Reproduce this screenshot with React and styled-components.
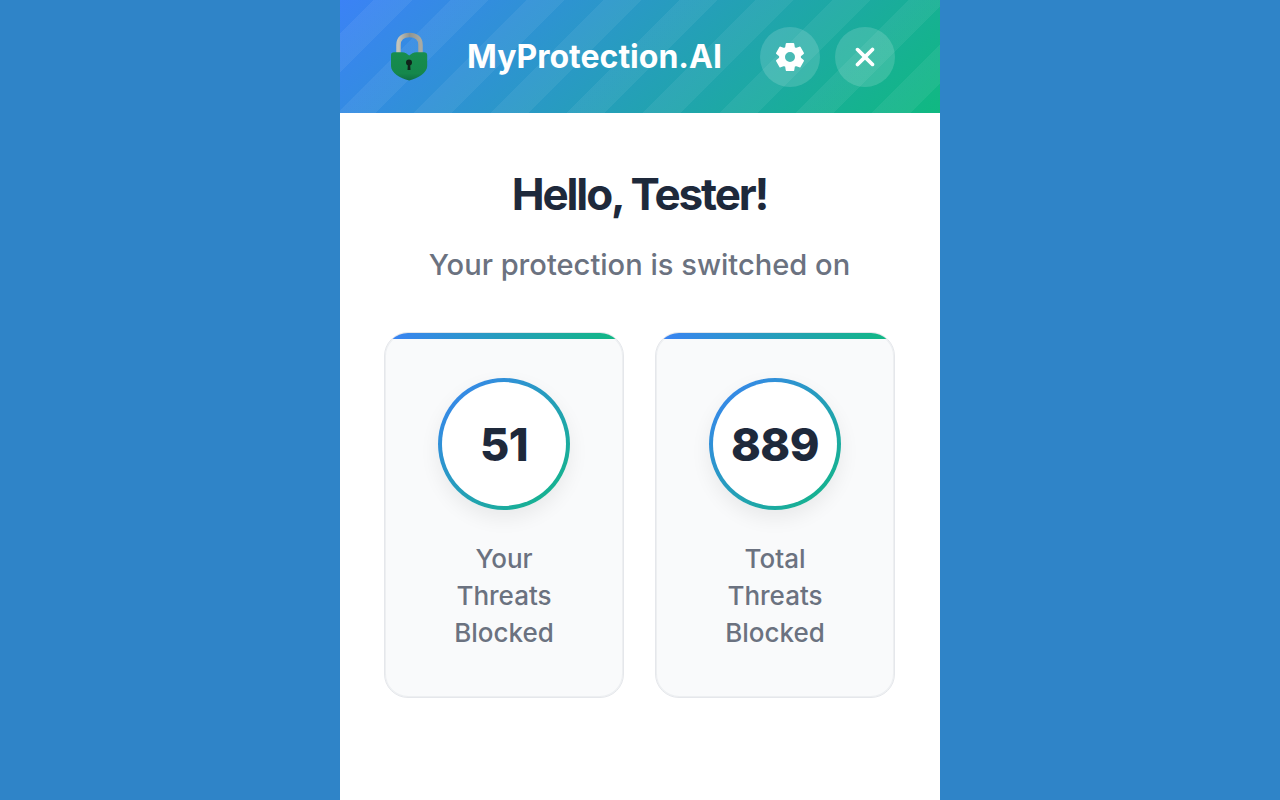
import React from 'react'
import styled, { createGlobalStyle } from 'styled-components'
import { FaXmark } from 'react-icons/fa6'

const GlobalStyle = createGlobalStyle`
  html, body { margin: 0; padding: 0; height: 100%; }
  body { background: #2f84c8; font-family: Inter, "Noto Sans", sans-serif; }
  #root { height: 100%; }
`

// six teeth, pointing straight up and down
const toothAngles = [-90, -30, 30, 90, 150, 210]
const gearOutline = toothAngles
  .flatMap((a) => [[10, a - 23], [13.5, a - 14], [13.5, a + 14], [10, a + 23]])
  .map(([r, deg], i) => {
    const rad = (deg * Math.PI) / 180
    return `${i ? 'L' : 'M'}${(15 + r * Math.cos(rad)).toFixed(2)} ${(15 + r * Math.sin(rad)).toFixed(2)}`
  })
  .join('')

function GearIcon() {
  return (
    <svg width="30" height="30" viewBox="0 0 30 30">
      <path
        d={`${gearOutline}ZM15 9A6 6 0 1 0 15 21A6 6 0 1 0 15 9Z`}
        fill="#fff"
        fillRule="evenodd"
        stroke="#fff"
        strokeWidth="2"
        strokeLinejoin="round"
      />
    </svg>
  )
}

function LockIcon() {
  return (
    <svg width="40" height="50" viewBox="0 0 40 50">
      <defs>
        <linearGradient id="shackle" x1="0" y1="0" x2="1" y2="0">
          <stop offset="0" stopColor="#c4c4ba" />
          <stop offset="0.5" stopColor="#8f9490" />
          <stop offset="1" stopColor="#a9aaa2" />
        </linearGradient>
        <linearGradient id="body" x1="0" y1="0" x2="0" y2="1">
          <stop offset="0" stopColor="#178d4e" />
          <stop offset="0.75" stopColor="#15874c" />
          <stop offset="1" stopColor="#0f6f45" />
        </linearGradient>
      </defs>
      <path d="M9.500 24V13C9.500 6.500 14 3 20.500 3S31.500 6.500 31.500 13V24" fill="none" stroke="url(#shackle)" strokeWidth="4.500" />
      <path d="M2 23C2 21 3 20.200 5 20.200H13C16 20.200 18.500 22 20.200 23.500C22 22 24.500 20.200 27.500 20.200H35C37 20.200 38.200 21 38.200 23V34C38.200 41 29 46 20.200 48.500C11 46 2 41 2 34Z" fill="url(#body)" />
      <circle cx="20" cy="30.500" r="3" fill="#10231a" />
      <path d="M18.900 31H21.100L21.500 38H18.500Z" fill="#10231a" />
    </svg>
  )
}

function StatCard({ value, lines }) {
  return (
    <Card>
      <Ring>
        <Count>{value}</Count>
      </Ring>
      <Label>
        {lines.map((line) => (
          <span key={line}>{line}</span>
        ))}
      </Label>
    </Card>
  )
}

export default function App() {
  return (
    <>
      <GlobalStyle />
      <Panel>
        <Header>
          <Brand>
            <LockSlot><LockIcon /></LockSlot>
            <Title>MyProtection.AI</Title>
          </Brand>
          <Actions>
            <RoundButton><GearIcon /></RoundButton>
            <RoundButton><FaXmark size={30} /></RoundButton>
          </Actions>
        </Header>
        <Main>
          <Greeting>Hello, Tester!</Greeting>
          <Status>Your protection is switched on</Status>
          <Stats>
            <StatCard value="51" lines={['Your', 'Threats', 'Blocked']} />
            <StatCard value="889" lines={['Total', 'Threats', 'Blocked']} />
          </Stats>
        </Main>
      </Panel>
    </>
  )
}

const Panel = styled.div`
  width: 600px;
  height: 800px;
  margin: 0 auto;
  background: #fff;
  overflow: hidden;
`

const Header = styled.header`
  height: 113px;
  box-sizing: border-box;
  padding: 0 45px 0 49px;
  display: flex;
  align-items: center;
  justify-content: space-between;
  background:
    repeating-linear-gradient(
      135deg,
      rgba(255, 255, 255, 0) 0 24px,
      rgba(255, 255, 255, 0.06) 24px 51px,
      rgba(255, 255, 255, 0) 51px 54px
    ),
    linear-gradient(135deg, #3b82f6, #10b981);
`

const Brand = styled.div`
  display: flex;
  align-items: center;
  gap: 38px;
`

const LockSlot = styled.div`
  display: flex;
  width: 40px;
`

const Title = styled.h1`
  margin: 0;
  font-size: 32px;
  font-weight: 700;
  color: #fff;
`

const Actions = styled.div`
  display: flex;
  gap: 15px;
`

const RoundButton = styled.button`
  width: 60px;
  height: 60px;
  padding: 0;
  border: none;
  border-radius: 50%;
  display: flex;
  align-items: center;
  justify-content: center;
  color: #fff;
  background: rgba(255, 255, 255, 0.15);
`

const Main = styled.main`
  padding: 53px 45px 0 44px;
  display: flex;
  flex-direction: column;
  align-items: center;
`

const Greeting = styled.h2`
  margin: 0;
  font-size: 44px;
  line-height: 56px;
  font-weight: 700;
  letter-spacing: -2.100px;
  color: #1e293b;
`

const Status = styled.p`
  margin: 24px 0 0;
  font-size: 29.100px;
  line-height: 38px;
  font-weight: 500;
  color: #6b7280;
`

const Stats = styled.div`
  margin-top: 48px;
  display: flex;
  gap: 31px;
`

const Card = styled.div`
  position: relative;
  width: 240px;
  height: 366px;
  box-sizing: border-box;
  padding-top: 45px;
  border: 1px solid #e5e7eb;
  border-radius: 24px;
  background: #f9fafb;
  box-shadow: inset 0 0 0 1px rgba(229, 231, 235, 0.6);
  overflow: hidden;
  display: flex;
  flex-direction: column;
  align-items: center;

  &::before {
    content: '';
    position: absolute;
    top: 0;
    left: 0;
    right: 0;
    height: 6px;
    background: linear-gradient(90deg, #3b82f6, #10b981);
  }
`

const Ring = styled.div`
  width: 132px;
  height: 132px;
  box-sizing: border-box;
  border: 4px solid transparent;
  border-radius: 50%;
  display: flex;
  align-items: center;
  justify-content: center;
  background:
    linear-gradient(#fff, #fff) padding-box,
    linear-gradient(135deg, #3b82f6, #10b981) border-box;
  box-shadow: 0 8px 20px rgba(0, 0, 0, 0.07);
`

const Count = styled.div`
  font-size: 45px;
  font-weight: 800;
  letter-spacing: -0.500px;
  color: #1e293b;
`

const Label = styled.div`
  margin-top: 30px;
  display: flex;
  flex-direction: column;
  align-items: center;
  font-size: 26px;
  line-height: 37px;
  font-weight: 500;
  color: #6b7280;
`
